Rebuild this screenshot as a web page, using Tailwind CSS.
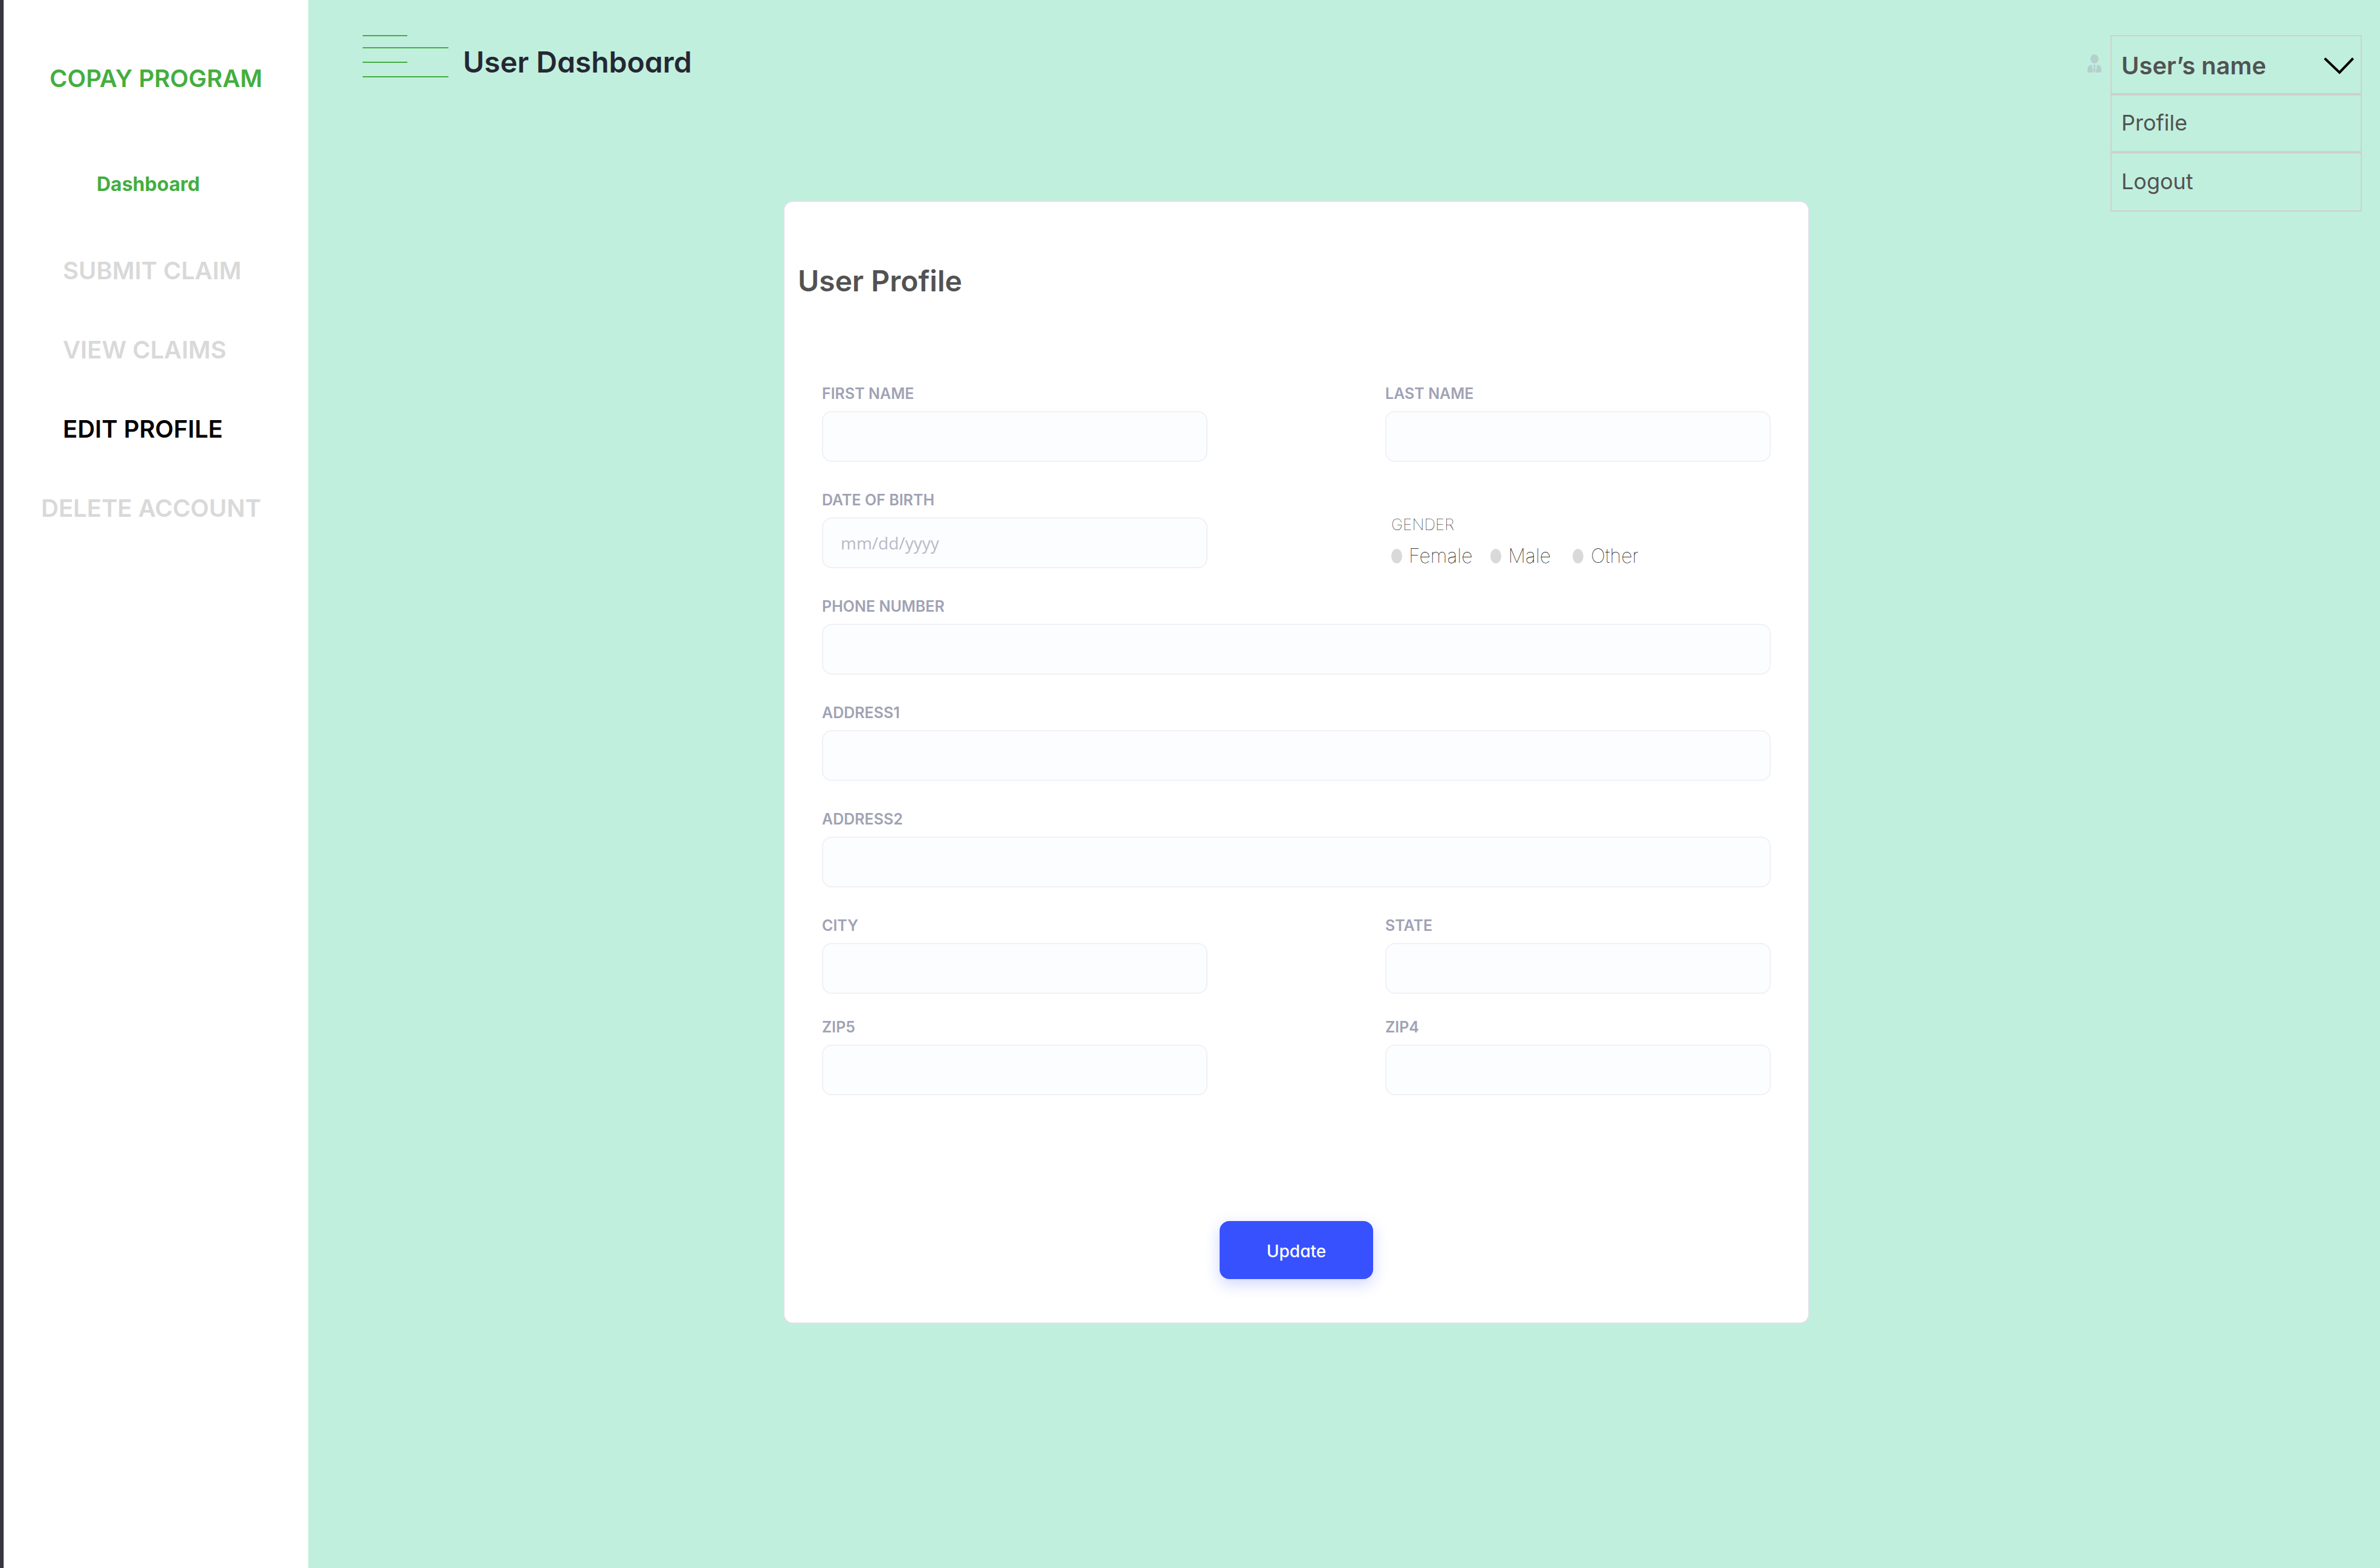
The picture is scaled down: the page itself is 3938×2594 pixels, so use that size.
<!DOCTYPE html>
<html lang="en">
<head>
<meta charset="utf-8">
<meta name="viewport" content="width=device-width, initial-scale=1">
<title>User Dashboard</title>
<script src="https://cdn.jsdelivr.net/npm/@tailwindcss/browser@4"></script>
</head>
<body class="flex min-h-screen bg-[#c1efde] font-['Inter',sans-serif] text-[#525252]">

  <aside class="w-[510px] shrink-0 border-l-6 border-[#373742] bg-white">
    <p class="pt-[106px] pl-[76px] text-[40px] leading-12 font-semibold text-[#43ae3f]">COPAY PROGRAM</p>
    <nav class="mt-[131px] flex flex-col items-start gap-[83px] pl-[98px] text-[40px] leading-12 font-semibold text-[#d9d9d9]" aria-label="Main">
      <a href="#" class="mb-4 ml-14 text-[32px] leading-10 font-bold text-[#43ae3f]">Dashboard</a>
      <a href="#">SUBMIT CLAIM</a>
      <a href="#">VIEW CLAIMS</a>
      <a href="#" class="text-black" aria-current="page">EDIT PROFILE</a>
      <a href="#" class="-ml-9">DELETE ACCOUNT</a>
    </nav>
  </aside>

  <main class="min-w-0 grow">
    <header class="flex h-[332px] items-start justify-between pt-[58px] pr-[30px] pl-[90px]">
      <div class="flex items-start gap-6">
        <button type="button" aria-label="Toggle menu">
          <svg class="block h-[70px] w-[142px]" viewBox="0 0 142 70" stroke="#43ae3f" stroke-width="2" fill="none">
            <path d="M0 1H74M0 21H142M0 45H74M0 69H142"/>
          </svg>
        </button>
        <h1 class="pt-[17px] text-5xl leading-14 font-semibold text-[#252733] [font-feature-settings:'cv11']">User Dashboard</h1>
      </div>

      <div class="flex items-start gap-[15px]">
        <svg class="mt-8 h-[30px] w-[23px]" viewBox="0 0 23 30" fill="#b4cfcd" aria-hidden="true">
          <ellipse cx="11.5" cy="7.5" rx="6.7" ry="7.5"/>
          <path d="M7 17L9.600 30H2Q0 30 0 28V25Q0 18 7 17Z"/>
          <path d="M16 17L13.400 30H21Q23 30 23 28V25Q23 18 16 17Z"/>
          <path d="M9.300 17H13.700L12.600 19.500L13.300 27L11.500 30L9.700 27L10.400 19.500Z"/>
        </svg>
        <div class="w-[416px] border-2 border-[#cfcfcf]">
          <button type="button" class="flex h-24 w-full items-center justify-between border-b-2 border-[#cfcfcf] pt-1 pr-[11px] pl-4 text-[40px] leading-12 font-semibold" aria-expanded="true">
            <span>User’s name</span>
            <svg class="h-7 w-[50px]" viewBox="0 0 50 28" fill="none" stroke="#000" stroke-width="4" aria-hidden="true">
              <path d="M1.500 1.500L26 25L48.500 1.500"/>
            </svg>
          </button>
          <a href="#" class="flex h-24 items-center border-y-2 border-[#cfcfcf] pb-0.5 pl-4 text-4xl leading-11 font-normal">Profile</a>
          <a href="#" class="flex h-24 items-center border-t-2 border-[#cfcfcf] pb-0.5 pl-4 text-4xl leading-11 font-normal">Logout</a>
        </div>
      </div>
    </header>

    <div class="grid grid-cols-[786fr_1698fr_944fr] pb-20">
      <form class="col-start-2 rounded-2xl border-2 border-[#dfe0eb] bg-white px-[62px] pt-[103px] pb-[72px]">
        <h2 class="-ml-10 text-5xl leading-14 font-semibold [font-feature-settings:'cv11']">User Profile</h2>

        <div class="mt-[143px] grid grid-cols-2 gap-x-[294px] gap-y-12 text-[25px] leading-[30px] font-semibold text-[#9fa2b4]">
          <div class="flex flex-col gap-[14px]">
            <label for="first">FIRST NAME</label>
            <input id="first" type="text" class="h-[84px] w-full rounded-2xl border-2 border-[#f0f1f7] bg-[#fcfdfe] px-[29px] text-[28px] font-normal">
          </div>
          <div class="flex flex-col gap-[14px]">
            <label for="last">LAST NAME</label>
            <input id="last" type="text" class="h-[84px] w-full rounded-2xl border-2 border-[#f0f1f7] bg-[#fcfdfe] px-[29px] text-[28px] font-normal">
          </div>
          <div class="flex flex-col gap-[14px]">
            <label for="dob">DATE OF BIRTH</label>
            <input id="dob" type="text" placeholder="mm/dd/yyyy" class="h-[84px] w-full rounded-2xl border-2 border-[#f0f1f7] bg-[#fcfdfe] px-[29px] font-['Open_Sans',sans-serif] text-[28px] font-normal placeholder:text-[#b9bac9]">
          </div>
          <fieldset class="pt-10 pl-[10px] font-thin text-black">
            <legend class="contents"><span class="block text-[26px] leading-8">GENDER</span></legend>
            <div class="mt-4 flex text-[32px] leading-10">
              <label class="flex items-center gap-[11px]"><input type="radio" name="gender" class="h-6 w-[18px] appearance-none rounded-[50%] bg-[#d9d9d9] checked:bg-[#3751ff]">Female</label>
              <label class="ml-[30px] flex items-center gap-[11px]"><input type="radio" name="gender" class="h-6 w-[18px] appearance-none rounded-[50%] bg-[#d9d9d9] checked:bg-[#3751ff]">Male</label>
              <label class="ml-9 flex items-center gap-3"><input type="radio" name="gender" class="h-6 w-[18px] appearance-none rounded-[50%] bg-[#d9d9d9] checked:bg-[#3751ff]">Other</label>
            </div>
          </fieldset>
          <div class="col-span-2 flex flex-col gap-[14px]">
            <label for="phone">PHONE NUMBER</label>
            <input id="phone" type="tel" class="h-[84px] w-full rounded-2xl border-2 border-[#f0f1f7] bg-[#fcfdfe] px-[29px] text-[28px] font-normal">
          </div>
          <div class="col-span-2 flex flex-col gap-[14px]">
            <label for="address1">ADDRESS1</label>
            <input id="address1" type="text" class="h-[84px] w-full rounded-2xl border-2 border-[#f0f1f7] bg-[#fcfdfe] px-[29px] text-[28px] font-normal">
          </div>
          <div class="col-span-2 flex flex-col gap-[14px]">
            <label for="address2">ADDRESS2</label>
            <input id="address2" type="text" class="h-[84px] w-full rounded-2xl border-2 border-[#f0f1f7] bg-[#fcfdfe] px-[29px] text-[28px] font-normal">
          </div>
          <div class="flex flex-col gap-[14px]">
            <label for="city">CITY</label>
            <input id="city" type="text" class="h-[84px] w-full rounded-2xl border-2 border-[#f0f1f7] bg-[#fcfdfe] px-[29px] text-[28px] font-normal">
          </div>
          <div class="flex flex-col gap-[14px]">
            <label for="state">STATE</label>
            <input id="state" type="text" class="h-[84px] w-full rounded-2xl border-2 border-[#f0f1f7] bg-[#fcfdfe] px-[29px] text-[28px] font-normal">
          </div>
          <div class="-mt-2 flex flex-col gap-[14px]">
            <label for="zip5">ZIP5</label>
            <input id="zip5" type="text" class="h-[84px] w-full rounded-2xl border-2 border-[#f0f1f7] bg-[#fcfdfe] px-[29px] text-[28px] font-normal">
          </div>
          <div class="-mt-2 flex flex-col gap-[14px]">
            <label for="zip4">ZIP4</label>
            <input id="zip4" type="text" class="h-[84px] w-full rounded-2xl border-2 border-[#f0f1f7] bg-[#fcfdfe] px-[29px] text-[28px] font-normal">
          </div>
        </div>

        <button type="submit" class="mx-auto mt-[208px] block h-24 w-[254px] rounded-2xl bg-[#3751ff] pt-1 text-[28px] leading-10 font-medium text-white shadow-[0_8px_24px_rgba(55,81,255,0.24)] [font-feature-settings:'cv11']">Update</button>
      </form>
    </div>
  </main>
</body>
</html>
